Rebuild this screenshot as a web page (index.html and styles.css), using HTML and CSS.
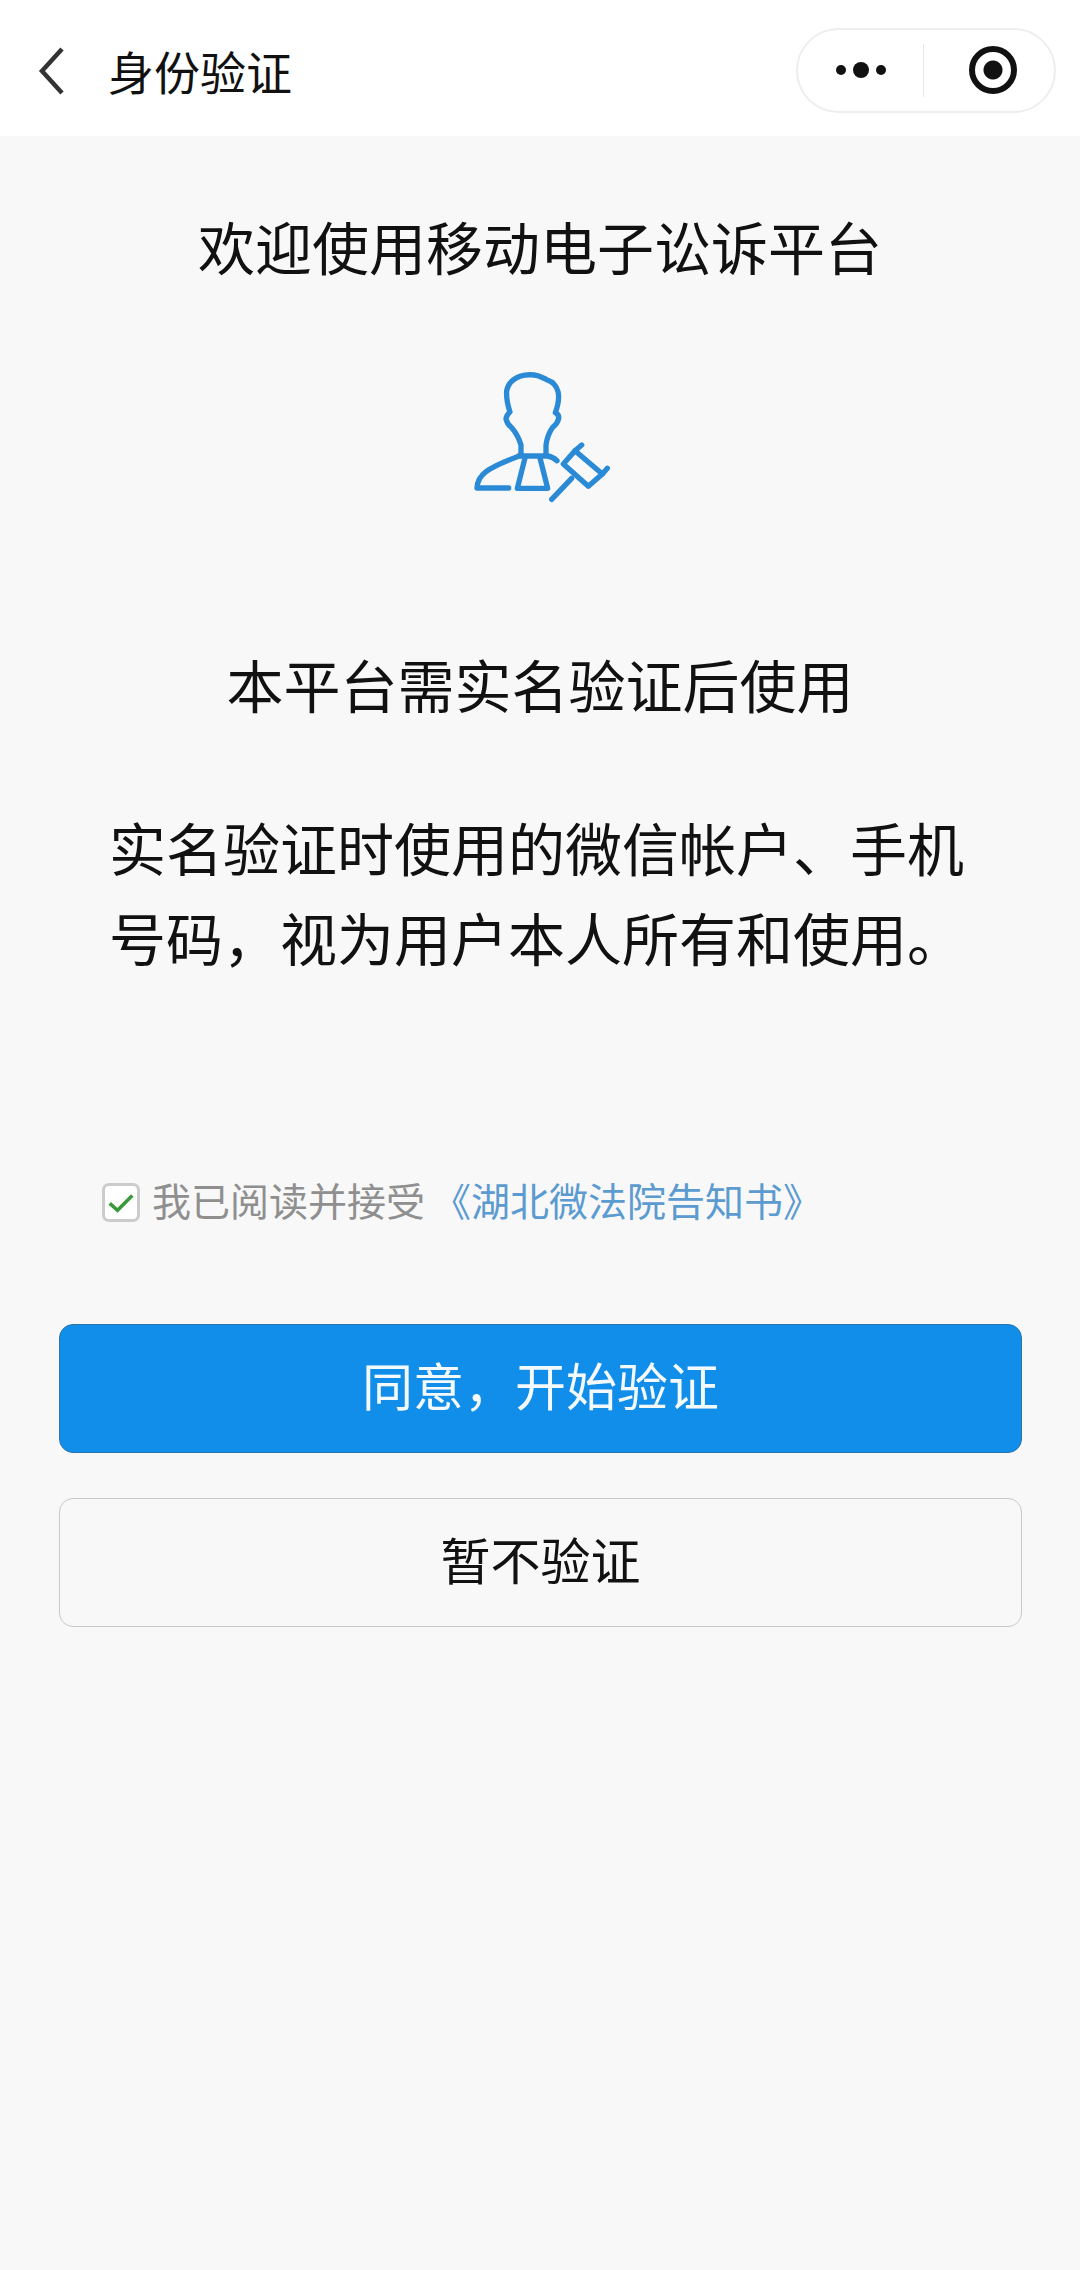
FILE: index.html
```html
<!DOCTYPE html>
<html lang="zh-CN">
<head>
    <meta charset="UTF-8">
    <meta name="viewport" content="width=device-width, initial-scale=1.0">
    <title>身份验证</title>
    <link rel="stylesheet" href="styles.css">
</head>
<body>
    <div class="header">
        <svg class="back-icon" viewBox="0 0 30 50">
            <path d="M25 3 L5 25 L25 47"/>
        </svg>
        <span class="header-title">身份验证</span>
        <div class="capsule">
            <div class="capsule-more">
                <span class="dot"></span>
                <span class="dot dot-big"></span>
                <span class="dot"></span>
            </div>
            <div class="capsule-line"></div>
            <div class="capsule-close">
                <span class="close-ring"></span>
            </div>
        </div>
    </div>

    <div class="content">
        <h1 class="welcome">欢迎使用移动电子讼诉平台</h1>

        <svg class="judge-icon" viewBox="0 0 600 510">
            <path d="M243 316 L243 285 Q234 255 214 232 Q201 222 198 206 Q200 194 210 186 Q198 150 200 122 Q206 92 240 79 Q268 70 296 78 Q312 84 322 90 Q347 98 354 125 Q360 150 346 188 Q358 194 356 206 Q352 222 338 232 Q322 255 318 285 L318 316"/>
            <path d="M236 319 Q165 345 138 365 Q112 385 111 414 L206 414"/>
            <path d="M236 318 L322 318 Q338 320 351 332"/>
            <path d="M256 320 L232 415 L323 415 L299 320"/>
            <path d="M405 302 L487 372 L445 409 L370 342 Z"/>
            <path d="M405 302 L425 285 M487 372 L502 355"/>
            <path d="M395 385 L335 448"/>
        </svg>

        <h2 class="notice-title">本平台需实名验证后使用</h2>
        <p class="notice-text">实名验证时使用的微信帐户、手机<br>号码，视为用户本人所有和使用。</p>

        <div class="agreement">
            <div class="checkbox">
                <svg viewBox="0 0 30 24">
                    <path d="M2 13 L11 21 L28 4"/>
                </svg>
            </div>
            <span class="agreement-text">我已阅读并接受</span>
            <a class="agreement-link">《湖北微法院告知书》</a>
        </div>

        <button class="btn btn-primary">同意，开始验证</button>
        <button class="btn btn-default">暂不验证</button>
    </div>
</body>
</html>
```

FILE: styles.css
```css
* {
    margin: 0;
    padding: 0;
    box-sizing: border-box;
}

body {
    font-family: "Liberation Sans", "Noto Sans CJK SC", sans-serif;
    background-color: #f8f8f8;
    color: #111;
    height: 2270px;
    overflow: hidden;
}

.header {
    height: 136px;
    background: white;
    display: flex;
    align-items: center;
    padding: 6px 24px 0 37px;
}

.back-icon {
    width: 30px;
    height: 50px;
    margin-right: 41px;
    fill: none;
    stroke: #333;
    stroke-width: 4.5;
}

.header-title {
    font-size: 46px;
    line-height: 60px;
    margin-top: 6px;
    flex: 1;
}

.capsule {
    width: 260px;
    height: 85px;
    margin-top: -2px;
    border: 2px solid #eee;
    border-radius: 43px;
    background: white;
    display: flex;
    align-items: center;
}

.capsule-more {
    width: 125px;
    display: flex;
    justify-content: center;
    align-items: center;
    gap: 7px;
}

.dot {
    width: 10px;
    height: 10px;
    border-radius: 50%;
    background: #111;
}

.dot-big {
    width: 16px;
    height: 16px;
}

.capsule-line {
    width: 1px;
    height: 53px;
    background: #e6e6e6;
}

.capsule-close {
    flex: 1;
    display: flex;
    justify-content: center;
    margin-left: 8px;
}

.close-ring {
    width: 48px;
    height: 48px;
    border: 6px solid #111;
    border-radius: 50%;
    background: radial-gradient(circle, #111 0, #111 9px, white 10px);
}

.content {
    display: flex;
    flex-direction: column;
    align-items: center;
}

.welcome,
.notice-title,
.notice-text {
    font-size: 57px;
    font-weight: normal;
    line-height: 90px;
    text-align: center;
}

.welcome {
    margin-top: 69px;
}

.judge-icon {
    width: 200px;
    height: 170px;
    margin-top: 55px;
    fill: none;
    stroke: #2b8ad6;
    stroke-width: 16;
    stroke-linecap: round;
    stroke-linejoin: round;
}

.notice-title {
    margin-top: 123px;
}

.notice-text {
    margin-top: 73px;
    width: 100%;
    padding-left: 109px;
    text-align: left;
}

.agreement {
    width: 100%;
    margin-top: 197px;
    padding-left: 102px;
    display: flex;
    align-items: center;
    font-size: 39px;
    line-height: 39px;
}

.checkbox {
    width: 38px;
    height: 39px;
    margin-right: 12px;
    border: 3px solid #ccc;
    border-radius: 7px;
    background: white;
    display: flex;
    align-items: center;
    justify-content: center;
}

.checkbox svg {
    width: 26px;
    height: 21px;
    fill: none;
    stroke: #3a9a3a;
    stroke-width: 4;
}

.agreement-text {
    color: #8f8f8f;
}

.agreement-link {
    margin-left: 7px;
    color: #5b9bd0;
}

.btn {
    width: 963px;
    height: 129px;
    margin-left: 1px;
    padding-bottom: 10px;
    border-radius: 14px;
    font-family: inherit;
    font-size: 51px;
}

.btn-primary {
    margin-top: 102px;
    background: #118ee9;
    border: 1px solid #2a74ae;
    color: #f4f9fd;
}

.btn-default {
    margin-top: 45px;
    background: #f8f8f8;
    border: 1px solid #c9c9c9;
    font-size: 50px;
    color: #111;
}
```
